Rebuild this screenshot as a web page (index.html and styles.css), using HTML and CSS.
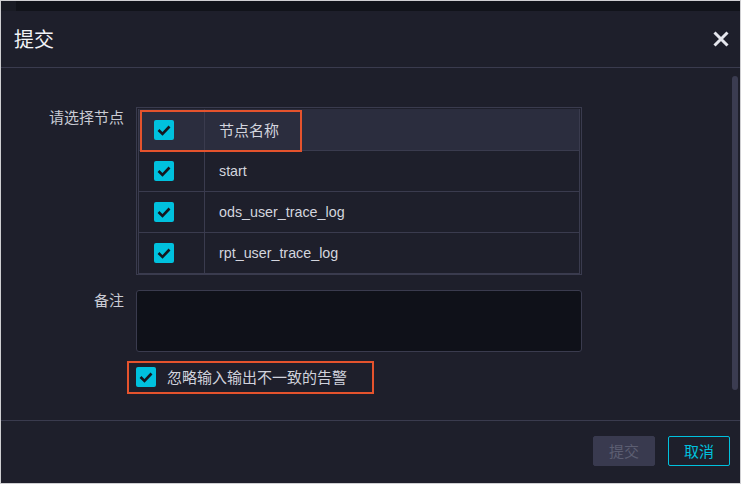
FILE: index.html
```html
<!DOCTYPE html>
<html lang="zh-CN">
<head>
<meta charset="utf-8">
<title>提交</title>
<link rel="stylesheet" href="styles.css">
</head>
<body>
<div class="frame">
  <div class="strip"><div class="strip-left"></div><div class="strip-right"></div></div>
  <div class="header">
    <div class="title">提交</div>
    <svg class="close" width="16" height="16" viewBox="0 0 16 16"><path d="M1.5 1.5 L14.5 14.5 M14.5 1.5 L1.5 14.5" stroke="#e6e7ee" stroke-width="3" fill="none"/></svg>
  </div>
  <div class="body">
    <div class="form-row">
      <div class="label">请选择节点</div>
      <div class="table-wrap">
        <div class="table">
          <div class="tr th">
            <div class="td td-check"><span class="cb"><svg viewBox="0 0 20 20"><path d="M4.5 10 L8.5 14 L15.5 6.5" /></svg></span></div>
            <div class="td td-name cjk">节点名称</div>
          </div>
          <div class="tr">
            <div class="td td-check"><span class="cb"><svg viewBox="0 0 20 20"><path d="M4.5 10 L8.5 14 L15.5 6.5" /></svg></span></div>
            <div class="td td-name">start</div>
          </div>
          <div class="tr">
            <div class="td td-check"><span class="cb"><svg viewBox="0 0 20 20"><path d="M4.5 10 L8.5 14 L15.5 6.5" /></svg></span></div>
            <div class="td td-name">ods_user_trace_log</div>
          </div>
          <div class="tr last">
            <div class="td td-check"><span class="cb"><svg viewBox="0 0 20 20"><path d="M4.5 10 L8.5 14 L15.5 6.5" /></svg></span></div>
            <div class="td td-name">rpt_user_trace_log</div>
          </div>
        </div>
        <div class="mark mark-head"></div>
      </div>
    </div>
    <div class="form-row remark-row">
      <div class="label">备注</div>
      <div class="textarea"></div>
    </div>
    <div class="ignore-row">
      <span class="cb"><svg viewBox="0 0 20 20"><path d="M4.5 10 L8.5 14 L15.5 6.5" /></svg></span>
      <span class="ignore-text">忽略输入输出不一致的告警</span>
      <div class="mark mark-ignore"></div>
    </div>
    <div class="scrollbar"></div>
  </div>
  <div class="footer">
    <button class="btn btn-disabled">提交</button>
    <button class="btn btn-cancel">取消</button>
  </div>
</div>
</body>
</html>
```
FILE: styles.css
```css
* { box-sizing: border-box; }
html, body { margin: 0; padding: 0; background: #1e1f2b; }
body {
  font-family: "Liberation Sans", "Noto Sans CJK SC", sans-serif;
  color: #d0d2dc;
}
.frame {
  width: 741px;
  height: 484px;
  border: 1px solid #cfcfd2;
  background: #1e1f2b;
  display: flex;
  flex-direction: column;
  overflow: hidden;
}
.strip { height: 10px; display: flex; flex: none; }
.strip-left { width: 15px; background: #191b24; }
.strip-right { flex: 1; background: #11131a; }
.header {
  height: 57px;
  flex: none;
  border-bottom: 1px solid #3a3b4e;
  display: flex;
  align-items: center;
  justify-content: space-between;
  padding: 0 11px 0 13px;
}
.title {
  font-family: "Noto Sans CJK SC", sans-serif;
  font-size: 20px;
  line-height: 24px;
  color: #f2f3f7;
}
.close { display: block; }
.body {
  flex: 1;
  position: relative;
  padding-top: 39px;
}
.form-row { display: flex; align-items: flex-start; }
.label {
  width: 123px;
  margin-right: 12px;
  text-align: right;
  font-family: "Noto Sans CJK SC", sans-serif;
  font-size: 15px;
  line-height: 17px;
  padding-top: 1px;
  color: #c9cbd4;
}
.table-wrap {
  position: relative;
  width: 446px;
  border: 1px solid #3a3b4e;
  padding: 1px 1px 0 1px;
}
.table {
  border-left: 1px solid #3a3b4e;
  border-right: 1px solid #3a3b4e;
}
.tr {
  display: grid;
  grid-template-columns: 66px 1fr;
  height: 41px;
  border-bottom: 1px solid #3a3b4e;
}
.tr.th { height: 42px; background: #2b2d3e; }
.td { display: flex; align-items: center; }
.td-check { border-right: 1px solid #3a3b4e; padding-left: 15px; }
.td-name {
  padding-left: 14px;
  font-size: 14.3px;
  color: #d3d5de;
}
.td-name.cjk {
  font-family: "Noto Sans CJK SC", sans-serif;
  font-size: 15px;
}
.cb {
  width: 20px;
  height: 20px;
  border-radius: 2px;
  background: #00c1de;
  display: inline-flex;
  flex: none;
}
.cb svg { width: 20px; height: 20px; }
.cb path { fill: none; stroke: #15161e; stroke-width: 2.6; }
.mark {
  position: absolute;
  border: 2px solid #e5532d;
}
.mark-head { left: 3px; top: 2px; width: 162px; height: 42px; }
.remark-row { margin-top: 15px; }
.textarea {
  width: 446px;
  height: 62px;
  background: #0f1119;
  border: 1px solid #3a3b4e;
  border-radius: 3px;
}
.ignore-row {
  position: relative;
  margin: 15px 0 0 135px;
  display: flex;
  align-items: center;
  width: 230px;
}
.ignore-text {
  margin-left: 11px;
  font-family: "Noto Sans CJK SC", sans-serif;
  font-size: 15px;
  line-height: 20px;
  color: #d0d2dc;
}
.mark-ignore { left: -9px; top: -6px; width: 247px; height: 33px; }
.scrollbar {
  position: absolute;
  right: 2px;
  top: 8px;
  width: 6px;
  height: 314px;
  border-radius: 3px;
  background: #3b3c51;
}
.footer {
  height: 63px;
  flex: none;
  border-top: 1px solid #3a3b4e;
  display: flex;
  justify-content: flex-end;
  align-items: flex-start;
  gap: 13px;
  padding: 15px 10px 0 0;
}
.btn {
  width: 62px;
  height: 30px;
  border-radius: 2px;
  font-family: "Noto Sans CJK SC", sans-serif;
  font-size: 15px;
  line-height: 20px;
  padding: 0;
}
.btn-disabled { background: #393a4f; border: 1px solid #393a4f; color: #5c5e72; }
.btn-cancel { background: transparent; border: 1px solid #00c1de; color: #00c1de; }
```
